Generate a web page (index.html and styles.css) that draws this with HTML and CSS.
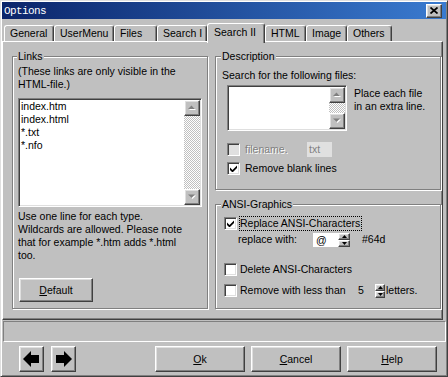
FILE: index.html
```html
<!DOCTYPE html>
<html lang="en">
<head>
    <meta charset="UTF-8">
    <meta name="viewport" content="width=device-width, initial-scale=1.0">
    <title>Options</title>
    <link rel="stylesheet" href="styles.css">
</head>
<body>
    <div class="window">
        <div class="titlebar">
            <span class="title">Options</span>
            <span class="close">
                <svg width="8" height="7" viewBox="0 0 8 7"><path d="M0.5 0.5 L7.5 6.5 M7.5 0.5 L0.5 6.5" stroke="#000" stroke-width="1.7"/></svg>
            </span>
        </div>

        <div class="tabs">
            <div class="tab tab-general">General</div>
            <div class="tab tab-usermenu">UserMenu</div>
            <div class="tab tab-files">Files</div>
            <div class="tab tab-search1">Search I</div>
            <div class="tab tab-search2 active">Search II</div>
            <div class="tab tab-html">HTML</div>
            <div class="tab tab-image">Image</div>
            <div class="tab tab-others">Others</div>
        </div>

        <div class="panel">
            <fieldset class="group links">
                <legend>Links</legend>
                <p class="note">(These links are only visible in the<br>HTML-file.)</p>
                <div class="list list-links">
                    <div class="items">index.htm<br>index.html<br>*.txt<br>*.nfo</div>
                    <div class="scroll">
                        <span class="sb-btn">
                            <svg width="9" height="6" viewBox="0 0 9 6"><polygon points="1,5 4.5,1.5 8,5" fill="#fff"/><polygon points="0,4 3.5,0.5 7,4" fill="#808080"/></svg>
                        </span>
                        <span class="sb-track"></span>
                        <span class="sb-btn">
                            <svg width="9" height="6" viewBox="0 0 9 6"><polygon points="1,1.5 8,1.5 4.5,5" fill="#fff"/><polygon points="0,0.5 7,0.5 3.5,4" fill="#808080"/></svg>
                        </span>
                    </div>
                </div>
                <p class="help">Use one line for each type.<br>Wildcards are allowed. Please note<br>that for example *.htm adds *.html<br>too.</p>
                <button class="btn btn-default"><u>D</u>efault</button>
            </fieldset>

            <div class="col">
                <fieldset class="group desc">
                    <legend>Description</legend>
                    <p class="search-label">Search for the following files:</p>
                    <div class="desc-row">
                        <div class="list list-files">
                            <div class="items"></div>
                            <div class="scroll">
                                <span class="sb-btn">
                                    <svg width="9" height="6" viewBox="0 0 9 6"><polygon points="1,5 4.5,1.5 8,5" fill="#fff"/><polygon points="0,4 3.5,0.5 7,4" fill="#808080"/></svg>
                                </span>
                                <span class="sb-track"></span>
                                <span class="sb-btn">
                                    <svg width="9" height="6" viewBox="0 0 9 6"><polygon points="1,1.5 8,1.5 4.5,5" fill="#fff"/><polygon points="0,0.5 7,0.5 3.5,4" fill="#808080"/></svg>
                                </span>
                            </div>
                        </div>
                        <p class="hint">Place each file<br>in an extra line.</p>
                    </div>
                    <div class="row row-filename">
                        <span class="cb cb-disabled"></span>
                        <span class="disabled-text">filename.</span>
                        <span class="field field-disabled">txt</span>
                    </div>
                    <div class="row row-blank">
                        <span class="cb">
                            <svg width="7" height="7" viewBox="0 0 7 7"><polygon points="0,2.5 2.5,5 7,0.5 7,3 2.5,7.5 0,5" fill="#000"/></svg>
                        </span>
                        <span>Remove blank lines</span>
                    </div>
                </fieldset>

                <fieldset class="group ansi">
                    <legend>ANSI-Graphics</legend>
                    <div class="row row-replace">
                        <span class="cb">
                            <svg width="7" height="7" viewBox="0 0 7 7"><polygon points="0,2.5 2.5,5 7,0.5 7,3 2.5,7.5 0,5" fill="#000"/></svg>
                        </span>
                        <span class="focus">Replace ANSI-Characters</span>
                    </div>
                    <div class="row row-with">
                        <span class="with-label">replace with:</span>
                        <span class="field field-char">@</span>
                        <span class="spin">
                            <span class="spin-btn"><svg width="5" height="3" viewBox="0 0 5 3"><polygon points="0,3 2.5,0 5,3" fill="#000"/></svg></span>
                            <span class="spin-btn"><svg width="5" height="3" viewBox="0 0 5 3"><polygon points="0,0 5,0 2.5,3" fill="#000"/></svg></span>
                        </span>
                        <span class="code">#64d</span>
                    </div>
                    <div class="row row-delete">
                        <span class="cb"></span>
                        <span>Delete ANSI-Characters</span>
                    </div>
                    <div class="row row-less">
                        <span class="cb"></span>
                        <span class="less-label">Remove with less than</span>
                        <span class="count">5</span>
                        <span class="spin spin-small">
                            <span class="spin-btn"><svg width="5" height="3" viewBox="0 0 5 3"><polygon points="0,3 2.5,0 5,3" fill="#000"/></svg></span>
                            <span class="spin-btn"><svg width="5" height="3" viewBox="0 0 5 3"><polygon points="0,0 5,0 2.5,3" fill="#000"/></svg></span>
                        </span>
                        <span class="letters">letters.</span>
                    </div>
                </fieldset>
            </div>
        </div>

        <div class="status"></div>

        <div class="buttons">
            <button class="btn btn-arrow">
                <svg width="17" height="16" viewBox="0 0 17 16"><polygon points="0,8 8,0 8,4 16,4 16,12 8,12 8,16" fill="#000"/></svg>
            </button>
            <button class="btn btn-arrow">
                <svg width="17" height="16" viewBox="0 0 17 16"><polygon points="17,8 9,0 9,4 1,4 1,12 9,12 9,16" fill="#000"/></svg>
            </button>
            <div class="spacer"></div>
            <button class="btn btn-wide"><u>O</u>k</button>
            <button class="btn btn-wide"><u>C</u>ancel</button>
            <button class="btn btn-wide"><u>H</u>elp</button>
        </div>
    </div>
</body>
</html>
```

FILE: styles.css
```css
* {
    box-sizing: border-box;
    margin: 0;
    padding: 0;
}

body {
    background-color: #c0c0c0;
    font-family: "Liberation Sans", Arial, sans-serif;
    font-size: 10.5px;
    line-height: 13px;
    color: #000;
}

/* raised / sunken bevels */
.btn, .close, .sb-btn, .spin-btn {
    background-color: #c0c0c0;
    border: 1px solid;
    border-color: #fff #404040 #404040 #fff;
    box-shadow: inset -1px -1px #808080, inset 1px 1px #dfdfdf;
}

.window {
    width: 448px;
    height: 377px;
    background-color: #c0c0c0;
    border: 1px solid;
    border-color: #dfdfdf #404040 #404040 #dfdfdf;
    box-shadow: inset 1px 1px #fff, inset -1px -1px #808080;
    padding: 1px;
    display: flex;
    flex-direction: column;
}

.titlebar {
    height: 17px;
    background: linear-gradient(90deg, #0a246a, #3a7bd0);
    display: flex;
    align-items: center;
    justify-content: space-between;
    padding: 0 4px 0 2px;
}

.title {
    font-family: "Liberation Mono", monospace;
    font-size: 11px;
    letter-spacing: -0.6px;
    color: #fff;
    padding-top: 2px;
}

.close {
    width: 16px;
    height: 14px;
    display: flex;
    align-items: center;
    justify-content: center;
}

/* tabs */
.tabs {
    height: 22px;
    display: flex;
    align-items: flex-end;
    padding-left: 2px;
}

.tab {
    height: 16px;
    padding: 1px 0 0 5px;
    border: 1px solid;
    border-bottom: none;
    border-color: #fff #404040 transparent #fff;
    border-radius: 3px 3px 0 0;
    box-shadow: inset -1px 0 #808080;
    white-space: nowrap;
}

.tab.active {
    height: 20px;
    margin-bottom: -2px;
    padding: 2px 0 0 6px;
    background-color: #c0c0c0;
    position: relative;
    z-index: 1;
}

.tab-general { width: 50px; }
.tab-usermenu { width: 60px; }
.tab-files { width: 43px; }
.tab-search1 { width: 50px; }
.tab-search2 { width: 58px; }
.tab-html { width: 41px; }
.tab-image { width: 41px; }
.tab-others { width: 45px; }

/* main panel */
.panel {
    height: 279px;
    margin-right: 3px;
    border: 1px solid;
    border-color: #fff #404040 #404040 #fff;
    box-shadow: inset -1px -1px #808080;
    display: flex;
    gap: 7px;
    padding: 8px 0 0 9px;
}

.group {
    border: 1px solid #808080;
    box-shadow: inset 1px 1px #fff, 1px 1px #fff;
    min-width: 0;
}

.group legend {
    padding: 0 1px;
    margin-left: -1px;
    background-color: #c0c0c0;
}

.links {
    width: 196px;
    height: 259px;
    padding: 0 5px;
}

.note {
    margin-top: 2px;
}

.list {
    display: flex;
    background-color: #fff;
    border: 1px solid;
    border-color: #808080 #fff #fff #808080;
    box-shadow: inset 1px 1px #404040, inset -1px -1px #dfdfdf;
    padding: 1px;
}

.list .items {
    flex: 1;
    padding: 0 1px;
}

.scroll {
    width: 16px;
    display: flex;
    flex-direction: column;
}

.sb-btn {
    height: 16px;
    display: flex;
    align-items: center;
    justify-content: center;
}

.sb-track {
    flex: 1;
    background: repeating-conic-gradient(#fff 0 25%, #c0c0c0 0 50%) 0 0 / 2px 2px;
}

.list-links {
    margin-top: 7px;
    height: 109px;
}

.help {
    margin-top: 3px;
}

.btn {
    font: inherit;
    color: #000;
}

.btn-default {
    width: 74px;
    height: 24px;
    margin: 16px 0 0 1px;
}

/* right column */
.col {
    display: flex;
    flex-direction: column;
    gap: 8px;
}

.desc, .ansi {
    width: 226px;
    padding: 0 6px;
}

.desc {
    height: 140px;
}

.ansi {
    height: 111px;
}

.search-label {
    margin-top: 6px;
}

.desc-row {
    display: flex;
    margin-top: 3px;
}

.list-files {
    width: 120px;
    height: 46px;
    margin-left: 5px;
}

.hint {
    margin: 2px 0 0 7px;
}

.row {
    height: 15px;
    display: flex;
    align-items: center;
    line-height: 15px;
    white-space: nowrap;
}

.cb {
    width: 13px;
    height: 13px;
    background-color: #fff;
    border: 1px solid;
    border-color: #808080 #fff #fff #808080;
    box-shadow: inset 1px 1px #404040, inset -1px -1px #dfdfdf;
    display: flex;
    align-items: center;
    justify-content: center;
    flex-shrink: 0;
}

.cb-disabled {
    background-color: #e0e0e0;
}

.row-filename {
    margin-top: 11px;
    padding-left: 5px;
}

.row-blank {
    margin-top: 4px;
    padding-left: 5px;
}

.row-filename .cb, .row-blank .cb {
    margin-right: 5px;
}

.disabled-text {
    width: 62px;
    color: #808080;
    text-shadow: 1px 1px #fff;
}

.field {
    height: 15px;
    width: 25px;
    padding-left: 2px;
    line-height: 15px;
}

.field-disabled {
    background-color: #e0e0e0;
    color: #808080;
}

.field-char {
    background-color: #fff;
    height: 14px;
    line-height: 14px;
    padding-left: 3px;
}

.row-replace {
    margin-top: 5px;
    padding-left: 2px;
}

.row-replace .cb {
    margin-right: 2px;
}

.focus {
    outline: 1px dotted #000;
    outline-offset: -1px;
    padding: 0 2px 0 1px;
}

.row-with {
    margin-top: 1px;
    padding-left: 16px;
}

.with-label {
    width: 75px;
}

.spin {
    width: 12px;
    height: 14px;
    display: flex;
    flex-direction: column;
}

.spin-btn {
    flex: 1;
    display: flex;
    align-items: center;
    justify-content: center;
}

.spin-btn svg {
    display: block;
}

.code {
    margin-left: 12px;
}

.row-delete {
    margin-top: 15px;
    padding-left: 2px;
}

.row-less {
    margin-top: 6px;
    padding-left: 2px;
}

.row-delete .cb, .row-less .cb {
    margin-right: 3px;
}

.less-label {
    width: 118px;
}

.count {
    width: 17px;
}

.spin-small {
    width: 10px;
}

.letters {
    margin-left: 1px;
}

/* bottom */
.status {
    height: 21px;
    margin: 1px 0 0 1px;
    border: 1px solid;
    border-color: #808080 #fff #fff #808080;
}

.buttons {
    height: 26px;
    margin-top: 4px;
    display: flex;
    gap: 6px;
    padding: 0 9px 0 17px;
}

.btn-arrow {
    width: 25px;
    height: 26px;
    display: flex;
    align-items: center;
    justify-content: center;
}

.btn-arrow + .btn-arrow {
    margin-left: 1px;
}

.spacer {
    flex: 1;
}

.btn-wide {
    width: 90px;
    height: 26px;
}
```
